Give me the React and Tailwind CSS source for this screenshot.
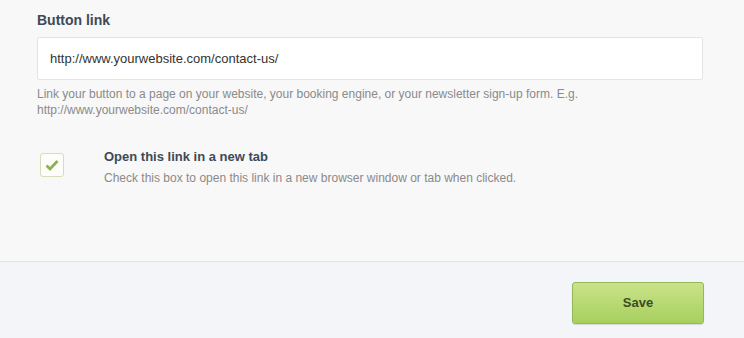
export default function App() {
  return (
    <div className="w-[744px] h-[338px] flex flex-col bg-[#f8f8f8] font-['Liberation_Sans',Arial,sans-serif] overflow-hidden">
      <div className="h-[262px] px-[37px] pt-[12px] border-b border-[#e2e4e6]">
        <div className="text-[14px] font-bold text-[#3d4a57] leading-[16px]">Button link</div>
        <div className="mt-[9px] w-[666px] h-[43px] bg-white border border-[#e4e4e4] rounded-[2px] flex items-center px-[12px] text-[13px] text-[#333]">
          http://www.yourwebsite.com/contact-us/
        </div>
        <p className="mt-[6px] text-[12px] leading-[16px] text-[#8a8a8a]">
          Link your button to a page on your website, your booking engine, or your newsletter sign-up form. E.g.
          <br />
          http://www.yourwebsite.com/contact-us/
        </p>
        <div className="mt-[31px] flex items-start">
          <div className="ml-[3px] mt-[4px] w-[24px] h-[24px] rounded-[3px] border border-[#d7ddbb] bg-[#fdfdf9] flex items-center justify-center">
            <svg width="14" height="12" viewBox="0 0 14 12">
              <path d="M1.5 6.5 L5 10 L12.5 2" fill="none" stroke="#8db255" strokeWidth="2.8" strokeLinecap="butt" />
            </svg>
          </div>
          <div className="ml-[40px]">
            <div className="text-[13px] font-bold text-[#3d4a57] leading-[16px]">Open this link in a new tab</div>
            <div className="mt-[5px] text-[12px] leading-[16px] text-[#8a8a8a]">Check this box to open this link in a new browser window or tab when clicked.</div>
          </div>
        </div>
      </div>
      <div className="flex-1 bg-[#f3f5f8] flex justify-end items-start pt-[20px] pr-[40px]">
        <button className="w-[132px] h-[42px] rounded-[3px] border border-[#95b75a] bg-gradient-to-b from-[#c9e388] to-[#a7cf5e] text-[13px] font-bold text-[#3b4d25] shadow-[0_1px_1px_rgba(0,0,0,0.12)]">
          Save
        </button>
      </div>
    </div>
  );
}
